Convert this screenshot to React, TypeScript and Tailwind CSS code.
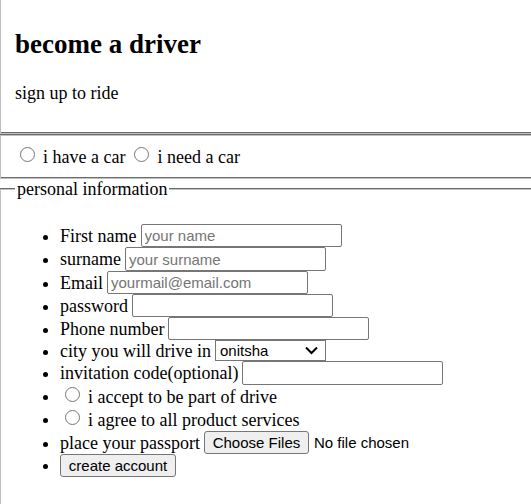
import type { ReactNode } from "react";

const serif = "font-['Liberation_Serif','Times_New_Roman',serif]";
const sans = "font-['Liberation_Sans',Arial,sans-serif]";

function TextRow({ id, label, type = "text", placeholder, height }: { id: string; label: string; type?: string; placeholder?: string; height?: string }) {
  return (
    <Row height={height}>
      <label htmlFor={id}>{label}</label>
      <input
        id={id}
        type={type}
        placeholder={placeholder}
        className={`${sans} h-full w-[201px] rounded-[2px] border border-[#767676] bg-white px-[3px] text-[15px] leading-[17px] placeholder:text-[#757575]`}
      />
    </Row>
  );
}

function Row({ children, height = "h-[23px]" }: { children: ReactNode; height?: string }) {
  return (
    <li>
      <div className={`flex items-center gap-1 ${height}`}>{children}</div>
    </li>
  );
}

function Radio({ id, name, label }: { id: string; name: string; label: string }) {
  return (
    <span className="flex items-center gap-2 pl-[5px]">
      <input id={id} name={name} type="radio" className="mb-1 size-[15px] appearance-none rounded-full border border-[#767676] bg-white checked:border-4 checked:border-[#0075ff]" />
      <label htmlFor={id}>{label}</label>
    </span>
  );
}

export default function App() {
  return (
    <form className={`${serif} min-h-screen overflow-hidden bg-white text-[18px] leading-[20px] text-black`} onSubmit={(e) => e.preventDefault()}>
      <header className="border-b-2 border-l border-[#c0c0c0] pt-[29px] pb-[29px] pl-[14px] [border-bottom-style:groove]">
        <h2 className="text-[27px] leading-[31px] font-bold">become a driver</h2>
        <p className="mt-[23px]">sign up to ride</p>
      </header>

      <fieldset className="flex h-[45px] items-center gap-1 border-y-2 border-l border-[#c0c0c0] pl-[14px] [border-style:groove_none_groove_solid]">
        <Radio id="have-car" name="car" label="i have a car" />
        <Radio id="need-car" name="car" label="i need a car" />
      </fieldset>

      <fieldset className="min-h-[325px] border-t-2 border-l border-[#c0c0c0] pl-[14px] [border-style:groove_none_none_solid]">
        <legend className="px-[2px]">personal information</legend>
        <ul className="mt-[25px] list-disc pl-[45px]">
          <TextRow id="first" label="First name" placeholder="your name" />
          <TextRow id="surname" label="surname" placeholder="your surname" height="h-[24px]" />
          <TextRow id="email" label="Email" type="email" placeholder="yourmail@email.com" />
          <TextRow id="password" label="password" type="password" />
          <TextRow id="phone" label="Phone number" type="tel" />
          <li>
            <div className="flex h-[21px] items-center gap-1">
              <label htmlFor="city">city you will drive in</label>
              <span className="relative">
                <select id="city" className={`${sans} block h-[21px] w-[111px] appearance-none border border-[#767676] bg-white pl-1 text-[15px] leading-[17px]`}>
                  <option>onitsha</option>
                </select>
                <svg className="pointer-events-none absolute top-[6px] right-[8px]" width="13" height="9" viewBox="0 0 13 9" fill="none" stroke="black" strokeWidth="2">
                  <path d="M1 1.5 6.5 7 12 1.5" />
                </svg>
              </span>
            </div>
          </li>
          <TextRow id="invite" label="invitation code(optional)" height="h-[24px]" />
          <Row>
            <Radio id="accept" name="accept" label="i accept to be part of drive" />
          </Row>
          <Row>
            <Radio id="agree" name="agree" label="i agree to all product services" />
          </Row>
          <Row>
            <label htmlFor="passport">place your passport</label>
            <input
              id="passport"
              type="file"
              multiple
              className={`${sans} h-[23px] text-[15px] leading-[17px] file:mr-[5px] file:h-[23px] file:w-[105px] file:rounded-[3px] file:border file:border-solid file:border-[#767676] file:bg-[#efefef] file:p-0`}
            />
          </Row>
          <Row>
            <button className={`${sans} h-[23px] w-[116px] rounded-[3px] border border-[#767676] bg-[#efefef] text-[15px] leading-[17px]`}>create account</button>
          </Row>
        </ul>
      </fieldset>
    </form>
  );
}
